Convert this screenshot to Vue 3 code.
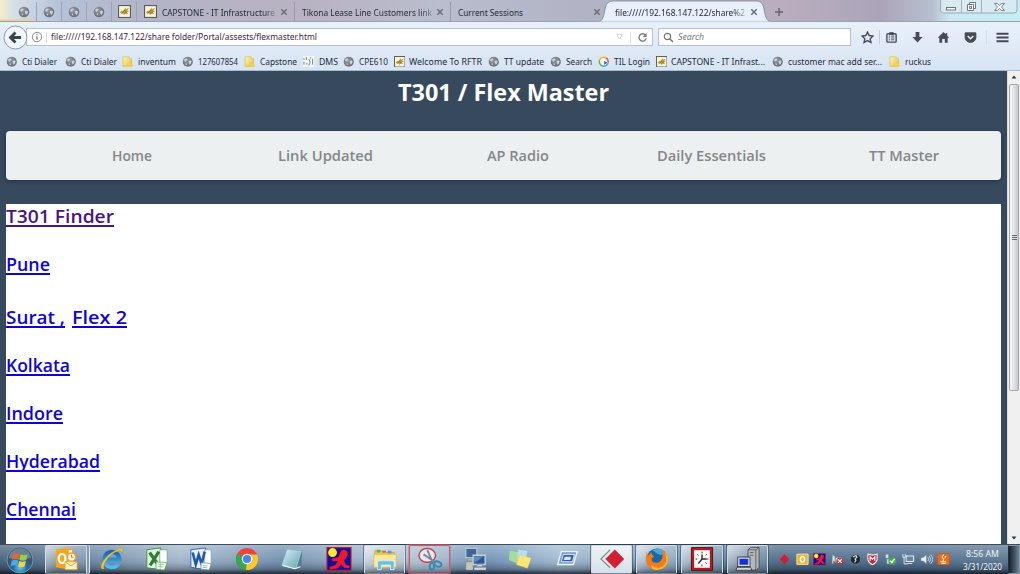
<script setup>
import { h } from 'vue'

// Single-line label whose glyphs are fitted to a given width.
const FitText = (p) =>
  h('svg', { class: 'fit', width: p.w, height: p.ht, style: { display: 'block', overflow: 'visible', flex: 'none' } }, [
    h('text', { x: 0, y: p.base, textLength: p.w, lengthAdjust: 'spacingAndGlyphs', fill: 'currentColor' }, p.t),
  ])
FitText.props = ['t', 'w', 'ht', 'base']

const pinned = ['globe', 'globe', 'globe', 'globe', 'cap']

const bookmarks = [
  { x: 6, i: 'globe', t: 'Cti Dialer', w: 35 },
  { x: 65, i: 'globe', t: 'Cti Dialer', w: 36 },
  { x: 122, i: 'folder', t: 'inventum', w: 38 },
  { x: 182, i: 'globe', t: '127607854', w: 40 },
  { x: 244, i: 'folder', t: 'Capstone', w: 37 },
  { x: 303, i: 'dms', t: 'DMS', w: 19 },
  { x: 343, i: 'globe', t: 'CPE610', w: 29 },
  { x: 393.5, i: 'cap', t: 'Welcome To RFTR', w: 73 },
  { x: 488, i: 'globe', t: 'TT update', w: 40 },
  { x: 550, i: 'globe', t: 'Search', w: 26 },
  { x: 598, i: 'til', t: 'TIL Login', w: 36 },
  { x: 655.5, i: 'cap', t: 'CAPSTONE - IT Infrast...', w: 94 },
  { x: 772, i: 'globe', t: 'customer mac add ser...', w: 94 },
  { x: 889, i: 'folder', t: 'ruckus', w: 26 },
  { x: 940 },
]
const marks = bookmarks.slice(0, -1).map((b, n) => ({ ...b, cell: bookmarks[n + 1].x - b.x }))

const nav = [
  { t: 'Home', w: 40 },
  { t: 'Link Updated', w: 95 },
  { t: 'AP Radio', w: 62 },
  { t: 'Daily Essentials', w: 109 },
  { t: 'TT Master', w: 70 },
]

const links = [
  [{ t: 'T301 Finder', w: 108, seen: true }],
  [{ t: 'Pune', w: 44 }],
  [{ t: 'Surat ,', w: 59 }, { t: 'Flex 2', w: 55 }],
  [{ t: 'Kolkata', w: 64 }],
  [{ t: 'Indore', w: 57 }],
  [{ t: 'Hyderabad', w: 94 }],
  [{ t: 'Chennai', w: 70 }],
]

const tasks = [
  { i: 'outlook', w: 46, k: 'boxed stacked' },
  { i: 'ie', w: 46 },
  { i: 'excel', w: 43 },
  { i: 'word', w: 46 },
  { i: 'chrome', w: 46 },
  { i: 'notepad', w: 45 },
  { i: 'runner', w: 47 },
  { i: 'explorer', w: 45, k: 'boxed' },
  { i: 'snip', w: 45, k: 'boxed alert' },
  { i: 'remote', w: 45 },
  { i: 'sticky', w: 46 },
  { i: 'run', w: 46 },
  { i: 'diamond', w: 45, k: 'boxed bright' },
  { i: 'firefox', w: 45, k: 'boxed' },
  { i: 'clock', w: 46, k: 'boxed' },
  { i: 'server', w: 45, k: 'boxed' },
]
const tray = ['t-dia', 't-out', 'runner', 't-err', 't-orb', 't-shield', 't-ok', 't-net', 't-vol', 't-java']
</script>

<template>
  <div class="screen">
    <svg class="defs" width="0" height="0" aria-hidden="true">
      <defs>
        <radialGradient id="gGlobe" cx=".4" cy=".35"><stop offset="0" stop-color="#9aa0a7" /><stop offset="1" stop-color="#6f757c" /></radialGradient>
        <radialGradient id="gStart" cx=".5" cy=".8"><stop offset="0" stop-color="#5cc9ee" /><stop offset=".55" stop-color="#236a9c" /><stop offset="1" stop-color="#38566f" /></radialGradient>
        <linearGradient id="gFold" x1="0" x2="1" y2="1"><stop offset="0" stop-color="#fff8b5" /><stop offset="1" stop-color="#e5bd3c" /></linearGradient>
        <linearGradient id="gNote" x1="0" x2="1" y2="1"><stop offset="0" stop-color="#d7f3f7" /><stop offset="1" stop-color="#5d9fac" /></linearGradient>
        <linearGradient id="gIe" x1="0" x2="0" y1="0" y2="1"><stop offset="0" stop-color="#1764b8" /><stop offset="1" stop-color="#48c1f2" /></linearGradient>
      </defs>
      <symbol id="globe" viewBox="0 0 12 12">
        <circle cx="6" cy="6" r="5.3" fill="url(#gGlobe)" />
        <path d="M2.200 3.700l2-1.200 1.500.6-.8 1.300-1.200.5.300 1.200-1.400-.5zM6.800 5.400l1.800-1 1.400 1-.6 2.300-1.300 1.300-.8-1.700zM3.700 7.500l1.500.6-.3 1.500-1-.6z" fill="#ced4da" />
      </symbol>
      <symbol id="cap" viewBox="0 0 12 12">
        <rect x=".5" y=".5" width="11" height="11" fill="#f7f3de" stroke="#5c5a55" />
        <path d="M1.600 7.200l1.800-2.200.9.700L7.300 2.200l-.2 2 3.100-1.600-1.600 2.700 2 .3-2.300 1 1.100 2-2.500-.8-1.500 1.500-.5-1.800-2.500 1.200.7-1.500z" fill="#bd9838" />
        <path d="M3.800 7.300l2.900-2.800M6 8l2-1.500" stroke="#6f5824" stroke-width=".6" />
      </symbol>
      <symbol id="folder" viewBox="0 0 12 12">
        <path d="M1 .8h6.500v2H10V11H1z" fill="url(#gFold)" stroke="#d5b342" stroke-width=".6" />
        <path d="M7.500 8H11v3.300H3z" fill="#f3cf4e" />
      </symbol>
      <symbol id="dms" viewBox="0 0 12 12">
        <rect width="12" height="12" fill="#f4f7f8" />
        <path d="M1 2v2M1 6v3M3.500 1v3M6 3q3 3 0 7M10 3v6M4 7v2" stroke="#77827d" fill="none" />
        <path d="M8 1v2" stroke="#a6a24a" />
      </symbol>
      <symbol id="til" viewBox="0 0 12 12">
        <circle cx="6" cy="6" r="4.600" fill="#fff" stroke="#eb5a3a" stroke-width="1.600" stroke-dasharray="7 22" stroke-dashoffset="6" />
        <circle cx="6" cy="6" r="4.600" fill="none" stroke="#3aa6e2" stroke-width="1.600" stroke-dasharray="8 21" stroke-dashoffset="-1" />
        <circle cx="6" cy="6" r="4.600" fill="none" stroke="#69b846" stroke-width="1.600" stroke-dasharray="7 22" stroke-dashoffset="-9" />
        <circle cx="6" cy="6" r="4.600" fill="none" stroke="#efb92c" stroke-width="1.600" stroke-dasharray="7 22" stroke-dashoffset="-16" />
        <path d="M6.500 5v4L9.600 7z" fill="#394fae" />
      </symbol>
      <symbol id="close" viewBox="0 0 8 8"><path d="M1.300 1.300l5.400 5.400M6.700 1.300L1.300 6.700" stroke="#6a6e7a" stroke-width="1.500" /></symbol>

      <symbol id="outlook" viewBox="0 0 28 26">
        <path d="M12 3h9v20h-9z" fill="#fff" stroke="#e39d28" />
        <path d="M3 3l14-2.500v24L3 22z" fill="#f3a51b" />
        <ellipse cx="9.800" cy="12.500" rx="3.600" ry="5" fill="none" stroke="#fff" stroke-width="2.500" />
        <circle cx="20" cy="11" r="4.500" fill="#fff6d7" stroke="#e8a42e" stroke-width="1.500" /><path d="M20 8.500V11h2" stroke="#b97312" fill="none" />
        <path d="M13 16h13v8.500H13z" fill="#fff2bf" stroke="#dda337" stroke-width=".8" /><path d="M13 16l6.500 4.500L26 16" fill="none" stroke="#dda337" />
      </symbol>
      <symbol id="ie" viewBox="0 0 28 26">
        <path d="M21 17.500A8.200 8.200 0 1 1 22 13.500H9" fill="none" stroke="url(#gIe)" stroke-width="4.400" />
        <path d="M5.500 23.500C-2 26 4 12 14 6S28 0 24 8c2-6-4-4-9-1S3 20 5.500 23.500" fill="#f4c72f" stroke="#bd9220" stroke-width=".4" />
      </symbol>
      <symbol id="excel" viewBox="0 0 28 26">
        <path d="M3 3l15-2v23.500L3 22.500z" fill="#e9f6e5" stroke="#388a3c" /><path d="M17 3h8v16h-8z" fill="#fff" stroke="#6aa66a" stroke-width=".8" />
        <path d="M6 6l9 13M16 5L6.500 20" stroke="#288235" stroke-width="3.500" />
        <path d="M13 16l12 1-3 8-9-1z" fill="#f4fff1" stroke="#55a05a" stroke-width=".8" /><path d="M15 18.500l7 .6M14.500 21l7 .6M18 17l-.6 7" stroke="#75b378" stroke-width=".6" />
      </symbol>
      <symbol id="word" viewBox="0 0 28 26">
        <path d="M3 3l16-2v23.500L3 22z" fill="#e6f0fb" stroke="#2d62ae" /><path d="M18 3h7v16h-7z" fill="#fff" stroke="#7898c2" stroke-width=".8" />
        <path d="M5 6l3.300 13 3.200-10.500 3.200 10L18 5" fill="none" stroke="#1f58a9" stroke-width="2.800" />
        <path d="M14 17l11 1-2 7-9-1z" fill="#fff" stroke="#588ac8" stroke-width=".8" /><path d="M16 20l5 .6M15.800 22l5 .6" stroke="#588ac8" stroke-width=".7" />
      </symbol>
      <symbol id="chrome" viewBox="0 0 28 26">
        <circle cx="14" cy="13" r="12" fill="#e8453c" /><path d="M14 13L3.600 7A12 12 0 0 0 13 25l5-9.500z" fill="#36a853" /><path d="M14 13l-1 12A12 12 0 0 0 24.900 8H14z" fill="#fbc72d" />
        <circle cx="14" cy="13" r="5.700" fill="#fff" /><circle cx="14" cy="13" r="4.400" fill="#4387ed" />
      </symbol>
      <symbol id="notepad" viewBox="0 0 28 26">
        <path d="M9 3l15 2-1 18-5 1z" fill="#557f8b" /><path d="M8 3l15 2-6 18.500L2 20z" fill="url(#gNote)" stroke="#c3e2e6" stroke-width=".6" /><path d="M3 20l13 3.500 6-2" fill="none" stroke="#f2fafa" stroke-width="1.200" />
      </symbol>
      <symbol id="runner" viewBox="0 0 28 26">
        <path d="M1 .7h26v24.600H1z" fill="#150f98" stroke="#be1930" stroke-width="1.200" /><circle cx="7" cy="6" r="4.800" fill="#ffe431" />
        <path d="M21 3.500q-4-1.500-5.500 2.500l-2 5-7 1.500.5 3 6-.3-3 4.300-6.500 2.500 1 2.500 8-1.500 4-4.500 3 4 5.500.5.500-2.500-4-1.200-2.500-5.300q3.500-2 4.500-6 .3-3-2.500-4.500" fill="#f1182c" />
      </symbol>
      <symbol id="explorer" viewBox="0 0 28 26">
        <path d="M3 4h7l2 2h12v16H3z" fill="#e8c75a" stroke="#ad9142" stroke-width=".6" /><path d="M5 3h4v3H5z" fill="#5eae54" /><path d="M11 4h4v2h-4z" fill="#db6148" /><path d="M17 4h4v3h-4z" fill="#6293c7" />
        <path d="M2 8h24v14H2z" fill="#fae99a" stroke="#d1b653" stroke-width=".6" /><path d="M6 24.500V17q0-2 2-2h14q2 0 2 2v7.500h-4v-5H10v5z" fill="#68bfe5" stroke="#dff5fa" stroke-width=".8" />
      </symbol>
      <symbol id="snip" viewBox="0 0 28 26">
        <ellipse cx="11" cy="9" rx="9" ry="7.500" fill="#e7e9ee" stroke="#c3394a" stroke-width="1.500" />
        <path d="M11 3l6 14M7 8l12 8" stroke="#7d858e" stroke-width="2" /><ellipse cx="16" cy="21" rx="2.400" ry="3.600" fill="none" stroke="#338bb5" stroke-width="2" /><ellipse cx="22.500" cy="18.500" rx="4" ry="2.600" transform="rotate(25 22.500 18.500)" fill="none" stroke="#338bb5" stroke-width="2" />
      </symbol>
      <symbol id="remote" viewBox="0 0 28 26">
        <path d="M4 1.500h12v10H4z" fill="#3e659b" stroke="#b9c1c9" stroke-width="1.500" /><path d="M6 13h8v2H6zM4 16h8v9H4z" fill="#c5c7bd" stroke="#697783" stroke-width=".5" />
        <path d="M12 9h13v10H12z" fill="#2f599a" stroke="#c9cfd5" stroke-width="1.500" /><path d="M12.500 10h11l-10 7z" fill="#5e8cc0" /><path d="M16 19h6v2.500h-6zM13 22h13v3H13z" fill="#d3d8de" stroke="#697783" stroke-width=".5" />
      </symbol>
      <symbol id="sticky" viewBox="0 0 28 26">
        <path d="M3 4l11 2-3 12-9-4z" fill="#a5dc9b" /><path d="M12 3l10 1-2 12-9-2z" fill="#b5dff1" /><path d="M14 9l12 3-4 11-12-4z" fill="#fbe674" stroke="#e5cc51" stroke-width=".4" />
      </symbol>
      <symbol id="run" viewBox="0 0 28 26">
        <path d="M9 5h17l-4 14H5z" fill="#7399d4" stroke="#edf5ff" stroke-width="1.500" /><path d="M11 8h12l-2 8H9z" fill="#345ca5" stroke="#eff5ff" /><path d="M12.500 10.500h7l-1 3.500h-7z" fill="#d8e6f5" />
      </symbol>
      <symbol id="diamond" viewBox="0 0 28 26"><path d="M12 3L2 13l10 9.500" fill="none" stroke="#719290" stroke-width="1.300" /><path d="M17 3l10 10-10 10L7 13z" fill="#d31f30" stroke="#bc1525" stroke-width=".4" /></symbol>
      <symbol id="firefox" viewBox="0 0 28 26">
        <circle cx="14" cy="12.500" r="11" fill="#1867a8" /><path d="M9 3.500Q18-1 22 6l-4 3-4-2z" fill="#4aa5d9" />
        <path d="M3 5q0 3 2 4 1-2 3-3 0 3 3 4l-3 3q1 5 7 4 5-2 5-8l-1-6q7 4 6 11-2 10-12 10Q3 24 2 14 2 8 3 5z" fill="#ef7c19" /><path d="M22 6q5.500 12-4 16-6 2-10-3-1 6 6 6 11-1 12-11 0-5-4-8z" fill="#fab529" />
      </symbol>
      <symbol id="clock" viewBox="0 0 28 26"><path d="M4 2h20v22H4z" fill="#fff" stroke="#b8181e" stroke-width="3" /><path d="M2.500.5h23v25h-23z" fill="none" stroke="#39191a" /><path d="M14 5v2M14 19v2M7 13h2M19 13h2M9 8l1 1M19 8l-1 1M19 18l-1-1" stroke="#242424" /><path d="M14 8v5h5M14 13l-4 5" fill="none" stroke="#252525" stroke-width="1.500" /></symbol>
      <symbol id="server" viewBox="0 0 28 26">
        <path d="M14 3l3-2.500h9V22l-3 3h-9z" fill="#b4b8bb" stroke="#353a40" stroke-width=".8" /><path d="M14 3h8.500v22M22.500 3L26 .5M16 6h4M16 9h4" fill="none" stroke="#444b52" stroke-width=".8" />
        <path d="M4 12h11v8H4z" fill="#1631d2" stroke="#e0e2df" stroke-width="1.500" /><path d="M2.800 10.800h13.400v10.400H2.800z" fill="none" stroke="#262a2e" stroke-width=".8" /><path d="M2 22h15l1 3.200H1z" fill="#d5d7d4" stroke="#262a2e" stroke-width=".8" />
      </symbol>

      <symbol id="t-dia" viewBox="0 0 28 26"><path d="M14 2l10 11-10 11L4 13z" fill="#d8192f" /></symbol>
      <symbol id="t-out" viewBox="0 0 28 26"><path d="M2 2h24v22H2z" fill="#f6ae27" stroke="#fff0bb" stroke-width="2" /><ellipse cx="14" cy="13" rx="4.500" ry="6" fill="none" stroke="#fff" stroke-width="3.500" /></symbol>
      <symbol id="t-err" viewBox="0 0 28 26"><path d="M3 3l6 4v11H5v5H2zM9 9h15v11H9z" fill="#dbe2e8" stroke="#5e6873" /><circle cx="19" cy="17" r="7.500" fill="#d92d35" /><path d="M15 13l8 8M23 13l-8 8" stroke="#fff" stroke-width="2.500" /></symbol>
      <symbol id="t-orb" viewBox="0 0 28 26"><circle cx="14" cy="13" r="11" fill="#22272d" stroke="#9aa8b5" /><path d="M8 8l7-3 2 4-4 3 2 3-3 5" fill="none" stroke="#dfe6eb" stroke-width="2.400" /></symbol>
      <symbol id="t-shield" viewBox="0 0 28 26"><path d="M4 2l10 2 10-2v12q-2 8-10 11Q6 22 4 14z" fill="#c22637" stroke="#eee" stroke-width="2.400" /><path d="M9 16V8l5 5 5-5v8" fill="none" stroke="#fff" stroke-width="2.600" /></symbol>
      <symbol id="t-ok" viewBox="0 0 28 26"><path d="M3 2h7v9H3zM6 12h8v11H6z" fill="#d9dfe5" stroke="#62707a" /><circle cx="18" cy="16.500" r="8.500" fill="#43a84a" /><path d="M13 16l4 4 6-8" fill="none" stroke="#fff" stroke-width="3" /></symbol>
      <symbol id="t-net" viewBox="0 0 28 26"><path d="M9 6h16v12H9z" fill="#68859c" stroke="#e6ecf1" stroke-width="2.300" /><path d="M2 2v7h5V2M4.500 9v14H13M12 22h10" fill="none" stroke="#e3eaef" stroke-width="2" /></symbol>
      <symbol id="t-vol" viewBox="0 0 28 26"><path d="M2 9h5l7-6v20l-7-6H2z" fill="#edf1f3" stroke="#687684" /><path d="M17 9q3 4 0 8M20 6q6 7 0 14M23 3q9 10 0 20" fill="none" stroke="#e6eef4" stroke-width="1.700" /></symbol>
      <symbol id="t-java" viewBox="0 0 28 26"><path d="M1 1h26v24H1z" fill="#eb6b17" stroke="#b94b0b" /><path d="M15 3q-7 5-2 8 3 3-1 6M20 6q-4 2-3 5M7 17q7 3 13 0M9 21q5 2 10 0" fill="none" stroke="#fff3df" stroke-width="2.200" /></symbol>
    </svg>

    <header class="chrome">
      <div class="tabs">
        <div v-for="(p, n) in pinned" :key="n" class="pin"><svg :class="p === 'cap' ? 'i13' : 'i12'"><use :href="'#' + p" /></svg></div>
        <div class="tab t1">
          <svg class="i13"><use href="#cap" /></svg>
          <span class="tab-label"><FitText t="CAPSTONE - IT Infrastructure" :w="113" :ht="12" :base="10" /></span>
          <svg class="x"><use href="#close" /></svg>
        </div>
        <div class="tab t2">
          <span class="tab-label"><FitText t="Tikona Lease Line Customers link" :w="130" :ht="12" :base="10" /></span>
          <svg class="x"><use href="#close" /></svg>
        </div>
        <div class="tab t3">
          <FitText t="Current Sessions" :w="65" :ht="12" :base="10" />
          <svg class="x"><use href="#close" /></svg>
        </div>
        <div class="tab active">
          <svg class="tab-shape" viewBox="0 0 176 22"><path d="M0 22q5 0 6.500-6l2-9Q10 1 16 1h143q6 0 7.500 6l2 9q1.500 6 7.500 6z" fill="#e8f0fa" stroke="#7e8598" stroke-width=".8" /><path d="M0 22.500h176" stroke="#e8f0fa" stroke-width="1.500" /></svg>
          <span class="tab-label"><FitText t="file://///192.168.147.122/share%2" :w="130" :ht="12" :base="10" /></span>
          <svg class="x"><use href="#close" /></svg>
        </div>
        <svg class="plus" viewBox="0 0 8 8"><path d="M4 0v8M0 4h8" stroke="#62656f" stroke-width="1.500" /></svg>
        <svg class="winbtns" viewBox="0 0 78 14">
          <path d="M.5-1h76.500v11q0 3-3 3h-70.500q-3 0-3-3z" fill="#dceaf2" fill-opacity=".8" stroke="#9aa8b8" />
          <path d="M21.500 0v13M41.500 0v13" stroke="#a3afbd" />
          <g fill="#fff" stroke="#6a7683"><rect x="6.500" y="7.500" width="9" height="2.500" /><path d="M29.500 2.500h6v6h-6z" /><path d="M27.500 4.500h6v6h-6zM29.500 6.500h2v2h-2z" /><path d="M54.500 3.500h3l2 2 2-2h3L61.500 7l3 3.500h-3l-2-2-2 2h-3l3-3.500z" stroke-width=".9" /></g>
        </svg>
      </div>

      <div class="toolbar">
        <svg class="back" viewBox="0 0 25 25"><circle cx="12.500" cy="12.500" r="11.500" fill="#f1f7fc" stroke="#8998a9" /><path d="M18 12.500H8M12.500 7.500l-5 5 5 5" fill="none" stroke="#37424f" stroke-width="2.800" /></svg>
        <div class="field url">
          <svg class="info" viewBox="0 0 12 12"><circle cx="6" cy="6" r="4.700" fill="none" stroke="#7c7c7c" stroke-width=".9" /><path d="M6 5.200v3.500M6 3v1.200" stroke="#777" stroke-width="1.200" /></svg>
          <i class="line" />
          <FitText class="addr" t="file://///192.168.147.122/share folder/Portal/assests/flexmaster.html" :w="266" :ht="12" :base="9" />
          <svg class="drop" viewBox="0 0 7 6"><path d="M.7.700h5.600L3.500 5z" fill="#fff" stroke="#c6c9ce" stroke-width=".8" /></svg>
          <i class="line l-right" />
          <svg class="reload" viewBox="0 0 12 12"><path d="M9.300 3.500A4 4 0 1 0 10 7" fill="none" stroke="#777b82" stroke-width="1.500" /><path d="M10.500 1v4.500H6z" fill="#777b82" /></svg>
        </div>
        <div class="field search">
          <svg class="mag" viewBox="0 0 11 11"><circle cx="4.500" cy="4.500" r="3.200" fill="none" stroke="#777" stroke-width="1.200" /><path d="M7 7l3 3" stroke="#777" stroke-width="1.500" /></svg>
          <FitText class="hint" t="Search" :w="26" :ht="12" :base="9" />
        </div>
        <div class="tools">
          <svg class="star" viewBox="0 0 14 14"><path d="M7 1.200l1.800 3.700 4.100.6-3 2.800.8 4.100L7 10.400l-3.700 2 .8-4.100-3-2.800 4.100-.6z" fill="none" stroke="#454c56" stroke-width="1.500" /></svg>
          <i class="sep" />
          <svg viewBox="0 0 14 14"><rect x="2" y="3" width="10" height="9" rx="1" fill="none" stroke="#454c56" stroke-width="1.500" /><path d="M5 1.800h4v2H5zM4 5.500h1.500M6.500 5.500H10M4 7.500h1.500M6.500 7.500H10M4 9.500h1.500M6.500 9.500H10" stroke="#454c56" fill="#454c56" /></svg>
          <svg viewBox="0 0 14 14"><path d="M5 1.200h4v5.300h3.500L7 12.500 1.500 6.500H5z" fill="#454c56" /></svg>
          <svg viewBox="0 0 14 14"><path d="M7 1.200l2.500 2.400V2.200H11v2.900l2.200 2.300h-1.700v5.300H8.400V8.500H5.600v4.200H2.500V7.400H.8z" fill="#454c56" /></svg>
          <svg class="pocket" viewBox="0 0 14 14"><path d="M1.200 2h11.600v5a5.800 5.300 0 0 1-11.600 0z" fill="#454c56" stroke="#454c56" stroke-linejoin="round" /><path d="M4 5.500l3 2.800 3-2.800" fill="none" stroke="#eef3f8" stroke-width="1.500" /></svg>
          <i class="sep faint" />
          <svg viewBox="0 0 14 14"><path d="M.5 3h13M.5 7h13M.5 11h13" stroke="#454c56" stroke-width="2.200" /></svg>
        </div>
      </div>

      <div class="marks">
        <a v-for="(b, n) in marks" :key="n" class="mark" :style="{ width: b.cell + 'px' }">
          <svg class="i12"><use :href="'#' + b.i" /></svg>
          <FitText :t="b.t" :w="b.w" :ht="12" :base="9" />
        </a>
      </div>
    </header>

    <div class="view">
      <main class="page">
        <h1><FitText t="T301 / Flex Master" :w="211" :ht="30" :base="24" /></h1>
        <nav><a v-for="n in nav" :key="n.t"><FitText :t="n.t" :w="n.w" :ht="20" :base="15" /></a></nav>
        <section>
          <div v-for="(row, r) in links" :key="r" class="row" :class="{ tall: r === 1 }">
            <a v-for="l in row" :key="l.t" :class="{ seen: l.seen }"><FitText :t="l.t" :w="l.w" :ht="20" :base="18" /></a>
          </div>
        </section>
      </main>
      <aside class="scroll">
        <svg class="arrow" viewBox="0 0 8 6"><path d="M1.500 4.500h5L4 1.500z" fill="#34383d" /></svg>
        <div class="thumb"><i /><i /><i /></div>
        <svg class="arrow" viewBox="0 0 8 6"><path d="M1.500 1.500h5L4 4.500z" fill="#34383d" /></svg>
      </aside>
    </div>

    <footer class="taskbar">
      <div class="start">
        <svg viewBox="0 0 28 28"><circle cx="14" cy="14" r="13" fill="url(#gStart)" stroke="#7194ae" /><path d="M3 12a11 10 0 0 1 22 0q-11 3-22 0" fill="#fff" fill-opacity=".25" />
          <path d="M7 8.500q3-2 6.500-.5l-1 5.500q-3-1.500-6.500.3z" fill="#ef632a" /><path d="M14.500 8.500q3 1.500 7 0l-1.300 5.500q-3.500 1.500-6.700 0z" fill="#9bd13d" /><path d="M5.700 15q3-2 6.500-.5l-1 5.500q-3-1.500-6.700.3z" fill="#4aabeb" /><path d="M13.200 15q3 1.500 6.700 0l-1.300 5.500q-3 1.500-6.500 0z" fill="#fcd13d" />
        </svg>
      </div>
      <div v-for="t in tasks" :key="t.i" class="task" :class="t.k" :style="{ width: t.w + 'px' }"><div><svg><use :href="'#' + t.i" /></svg></div></div>
      <div class="tray"><svg v-for="t in tray" :key="t"><use :href="'#' + t" /></svg></div>
      <div class="time">
        <FitText t="8:56 AM" :w="33" :ht="13" :base="9" />
        <FitText t="3/31/2020" :w="39" :ht="13" :base="9" />
      </div>
      <div class="peek" />
    </footer>
  </div>
</template>

<style>
html, body { margin: 0; overflow: hidden; }
</style>

<style scoped>
.screen { width: 1020px; height: 574px; display: flex; flex-direction: column; overflow: hidden; font-family: "Noto Sans", "Open Sans", sans-serif; font-size: 9px; color: #252a3a; }
.defs { position: absolute; }
svg { flex: none; }
.i12 { width: 12px; height: 12px; }
.i13 { width: 13px; height: 13px; }
.chrome { height: 70px; border-bottom: 1px solid #a8bccb; background: linear-gradient(#e8f0fa 22px, #dfe9f6 50px, #d6e4f3 70px); }
.tabs { height: 22px; display: flex; align-items: center; padding: 2px 0 0 12px; box-sizing: border-box; border-bottom: 1px solid #9aa1b3;
  background: linear-gradient(transparent 19px, #f3cf83 20px) 0 0 / 34px 22px no-repeat, linear-gradient(90deg, #f5edcb 0, #d6dfea 14px, #b5c2d7 60px, #b3b4c7 150px, #b9b2c2 300px, #b9bdcd 440px, #b1b3c4 590px, #b9aebf 780px, #aba4b9 880px, #b7bfce 932px, #cbe9f0 950px, #c4eef3 1020px); }
.pin { width: 25px; height: 19px; display: flex; align-items: center; justify-content: center; box-sizing: border-box; border-right: 1px solid #9da3b5; flex: none; }
.tab { display: flex; align-items: center; height: 19px; box-sizing: border-box; flex: none; position: relative; }
.tab .x { width: 8px; height: 8px; margin-left: auto; position: relative; }
.t1 { width: 158px; padding: 0 7px; gap: 5px; border-right: 1px solid #969bad; }
.t2 { width: 156px; padding: 0 6px 0 7px; border-right: 1px solid #969bad; }
.t3 { width: 152px; padding: 0 2px 0 7px; }
.active { width: 165px; padding: 0 10px 0 12px; }
.tab-shape { position: absolute; left: -6px; top: -2px; width: 176px; height: 22px; }
.tab-label { position: relative; }
.tab-label .fit { -webkit-mask-image: linear-gradient(90deg, #000 90%, rgba(0,0,0,.3)); mask-image: linear-gradient(90deg, #000 90%, rgba(0,0,0,.3)); }
.plus { width: 8px; height: 8px; margin-left: 7px; }
.winbtns { width: 78px; height: 14px; margin: -2px 2px 0 auto; align-self: flex-start; }
.toolbar { height: 30px; display: flex; align-items: center; padding-left: 3px; }
.back { width: 25px; height: 25px; z-index: 1; }
.field { height: 18px; background: #fff; border: 1px solid #b4c3d3; box-sizing: border-box; display: flex; align-items: center; }
.url { width: 630px; margin-left: -2px; padding-left: 4px; color: #43253e; }
.info { width: 12px; height: 12px; }
.line { width: 1px; height: 11px; background: #d9dce2; margin-left: 3px; }
.addr { margin-left: 4px; }
.drop { width: 7px; height: 6px; margin-left: 299px; }
.l-right { margin-left: 7px; }
.reload { width: 11px; height: 11px; margin-left: 6px; }
.search { width: 194px; margin-left: 4px; padding-left: 4px; color: #777; font-style: italic; gap: 4px; }
.mag { width: 11px; height: 11px; }
.tools { flex: 1; display: flex; align-items: center; padding-left: 9px; }
.tools svg { width: 13px; height: 13px; margin-right: 13.300px; }
.tools .star { margin-right: 5px; }
.tools .pocket { margin-right: 9px; }
.sep { width: 1px; height: 14px; background: #c0cad6; margin-right: 5px; }
.sep.faint { background: #d3dce7; margin-right: 9px; }
.marks { height: 18px; display: flex; align-items: center; padding-left: 6px; box-sizing: border-box; padding-top: 1px; }
.mark { display: flex; align-items: center; gap: 4px; flex: none; }
.mark .i12 { width: 11.500px; height: 11.500px; }
.url, .search, .tools { position: relative; }
.search { left: 1px; }
.tools { left: 2px; }

.view { flex: 1; min-height: 0; display: flex; font-family: "Open Sans", "Noto Sans", sans-serif; }
.page { width: 1007px; box-sizing: border-box; padding: 0 6px; background: #374a5d; display: flex; flex-direction: column; overflow: hidden; }
h1 { height: 60px; margin: 0; padding: 6px 0 0; box-sizing: border-box; display: flex; justify-content: center; font-size: 24px; font-weight: 700; color: #fff; }
nav { height: 49px; box-sizing: border-box; padding-left: 29.500px; background: #ecf0f1; border-radius: 4px; box-shadow: 0 1px 4px rgba(10, 20, 35, .5); display: grid; grid-template-columns: repeat(5, 193px); align-items: center; justify-items: center; flex: none; font-size: 15px; font-weight: 600; color: #858789; }
section { flex: 1; margin-top: 24px; background: #fff; font-size: 18.600px; font-weight: 600; overflow: hidden; padding-top: 1px; }
.row { height: 48px; display: flex; gap: 7px; }
.row.tall { height: 53px; }
.row a { height: 20px; border-bottom: 2px solid; color: #0c04d8; }
.row a.seen { color: #481681; }
.scroll { width: 13px; background: #f0f0f1; display: flex; flex-direction: column; align-items: center; box-sizing: border-box; border-left: 1px solid #d8dbe0; padding: 3px 0; }
.arrow { width: 8px; height: 6px; }
.thumb { width: 10px; height: 307px; margin: 4px 0 auto; border: 1px solid #a5a7aa; border-radius: 2px; box-sizing: border-box; background: linear-gradient(90deg, #f6f6f7, #e4e5e6 45%, #c6c7ca); display: flex; flex-direction: column; align-items: center; justify-content: center; gap: 1px; }
.thumb i { width: 5px; height: 1px; background: #686c70; }

.taskbar { height: 30px; box-sizing: border-box; border-top: 1px solid #3d4d5c; display: flex; align-items: center; flex: none;
  background: linear-gradient(rgba(255,255,255,.25), rgba(255,255,255,.06) 12px, rgba(10,20,32,.06) 18px, rgba(7,14,24,.3) 24px, rgba(7,14,24,.9) 30px), linear-gradient(90deg, #49647c, #6f8aa5 90px, #a7bacd 180px, #7694b3 280px, #b0c1d1 400px, #7597b8 490px, #a5bdd4 560px, #7391ad 700px, #54708b 780px, #527293 900px, #5e7994 1000px); }
.start { width: 44px; display: flex; justify-content: center; flex: none; box-sizing: border-box; padding-right: 4px; }
.start svg { width: 28px; height: 28px; }
.task { height: 29px; flex: none; box-sizing: border-box; padding: 0 3px 0 1px; }
.task > div { height: 29px; box-sizing: border-box; display: flex; align-items: center; justify-content: center; padding-bottom: 1px; }
.task svg { width: 26px; height: 24px; }
.boxed > div { border: 1px solid #d1dce5; border-bottom-color: #73879b; border-radius: 2px; background: linear-gradient(135deg, rgba(255,255,255,.65), rgba(255,255,255,.2) 50%, rgba(255,255,255,.12)); box-shadow: 0 0 0 1px rgba(28,45,64,.45); }
.stacked > div { box-shadow: 2px 0 0 #8398ad, 3px 0 0 #dde7ef; }
.alert > div { border-color: #c9566a; background: rgba(220,225,233,.25); box-shadow: 0 0 0 1px rgba(200,110,128,.5); }
.bright > div { background: linear-gradient(#f0f3f6, #d6e0e9); }
.tray { display: flex; align-items: center; gap: 4.700px; margin-left: 7px; }
.tray svg { width: 13px; height: 12.500px; }
.time { margin-left: auto; width: 44px; display: flex; flex-direction: column; align-items: center; color: #eff5fa; height: 28px; padding-top: 2px; box-sizing: border-box; }
.peek { width: 12px; height: 29px; margin-left: 4px; box-sizing: border-box; border: 1px solid #8497a8; border-left-color: #27323e; background: linear-gradient(90deg, #17212d, #465768 60%, #718395); }
</style>
